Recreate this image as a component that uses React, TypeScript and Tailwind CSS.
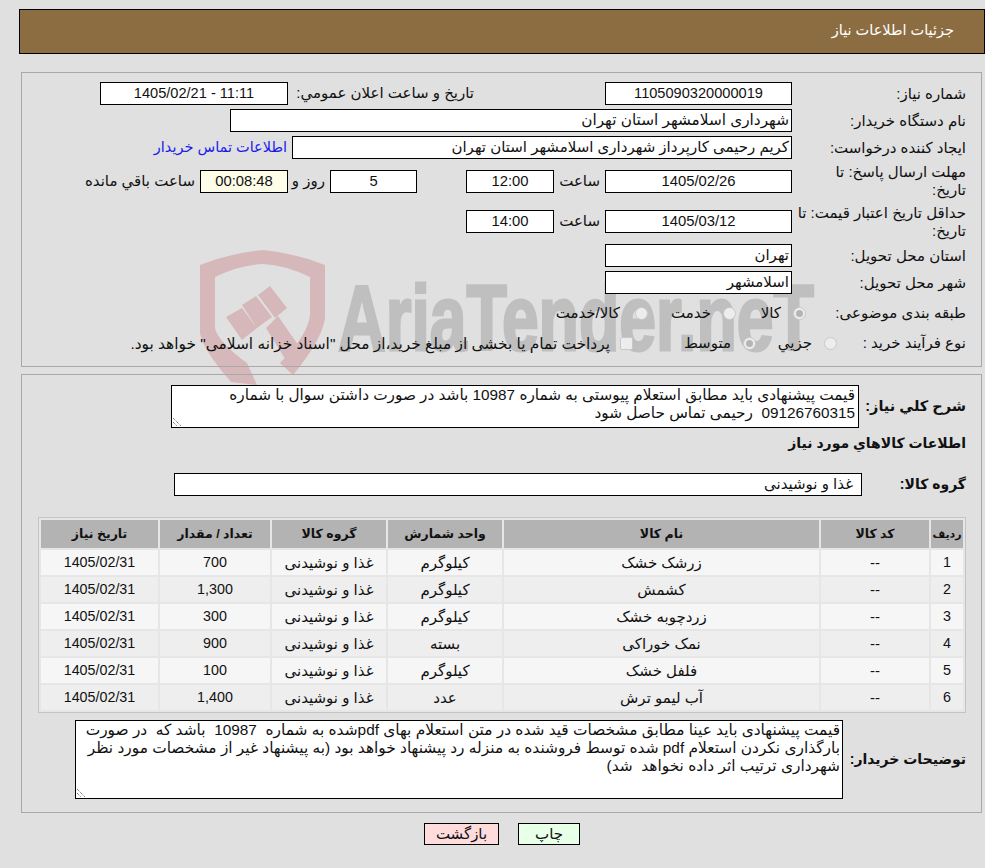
const rows = [
  ['1', '--', 'زرشک خشک', 'کیلوگرم', 'غذا و نوشیدنی', '700', '1405/02/31'],
  ['2', '--', 'کشمش', 'کیلوگرم', 'غذا و نوشیدنی', '1,300', '1405/02/31'],
  ['3', '--', 'زردچوبه خشک', 'کیلوگرم', 'غذا و نوشیدنی', '300', '1405/02/31'],
  ['4', '--', 'نمک خوراکی', 'بسته', 'غذا و نوشیدنی', '900', '1405/02/31'],
  ['5', '--', 'فلفل خشک', 'کیلوگرم', 'غذا و نوشیدنی', '100', '1405/02/31'],
  ['6', '--', 'آب لیمو ترش', 'عدد', 'غذا و نوشیدنی', '1,400', '1405/02/31'],
];

const headers = ['ردیف', 'کد کالا', 'نام کالا', 'واحد شمارش', 'گروه کالا', 'تعداد / مقدار', 'تاریخ نیاز'];
const colWidths = ['w-[32px]', 'w-[108px]', 'w-[315px]', 'w-[114px]', 'w-[114px]', 'w-[110px]', 'w-[117px]'];

function Field({ className, children }: { className: string; children?: React.ReactNode }) {
  return (
    <div className={`h-[23px] shrink-0 border border-black text-center leading-[20px] whitespace-nowrap ${className}`}>
      {children}
    </div>
  );
}

function Radio({ checked }: { checked?: boolean }) {
  return (
    <span className="flex h-[13px] w-[13px] shrink-0 items-center justify-center rounded-full border border-[#c8c8c8] bg-[#ededed]">
      {checked && <span className="h-[7px] w-[7px] rounded-full bg-[#b4b4b4]" />}
    </span>
  );
}

function Label({ children }: { children: React.ReactNode }) {
  return <div className="w-[189px] shrink-0 pr-[15px] leading-[18px] whitespace-nowrap">{children}</div>;
}

function Resize() {
  return (
    <svg className="absolute bottom-0 left-0" width="10" height="10" viewBox="0 0 10 10">
      <path d="M1 1l8 8M1 5l4 4" stroke="#555" strokeWidth="1" fill="none" strokeDasharray="1 1" />
    </svg>
  );
}

function Watermark() {
  return (
    <div dir="ltr" className="pointer-events-none absolute top-0 left-0 -z-10">
      <svg className="absolute top-[250px] left-[200px]" width="125" height="140" viewBox="0 0 125 140">
        <path
          d="M0 15Q30 3 63 0Q95 3 125 15V68Q122 90 93 125L80 113Q108 85 110 65V27Q85 15 63 14Q40 15 15 27V78Q18 92 47 113L57 135L31 132Q3 100 0 83Z"
          fill="#d6b8ba"
        />
        <path d="M26 67L42 58 57 78 42 90Z M42 55L56 46 72 67 57 78Z M58 45L70 36 87 58 75 68Z" fill="#d6b8ba" />
        <path d="M66 78L78 66 105 105 92 120Z" fill="#d6b8ba" />
      </svg>
      <div className="absolute top-[268px] left-[338px] origin-left scale-x-[0.71] font-['Liberation_Sans',sans-serif] text-[93px] leading-[100px] font-bold whitespace-nowrap text-[#bfbfbf] [-webkit-text-stroke:3px_#bfbfbf]">
        AriaTender.neT
      </div>
    </div>
  );
}

export default function App() {
  return (
    <div
      dir="rtl"
      className="relative isolate h-[868px] w-[985px] overflow-hidden bg-[#e0e0e0] pt-[9px] font-['Liberation_Sans','DejaVu_Sans',sans-serif] text-[15px] text-[#111]"
    >
      <Watermark />

      <div className="ml-[19px] flex h-[45px] items-center border border-black bg-[#8c6d42] pr-[30px] pb-[2px] text-[14.5px] text-white">
        جزئیات اطلاعات نیاز
      </div>

      <div className="mt-[18px] mr-[3px] ml-[21px] h-[295px] border border-[#a8a8a8] pt-[9px]">
        <div className="flex h-[23px] items-center">
          <Label>شماره نیاز:</Label>
          <Field className="w-[187px] bg-white text-[14.6px]">1105090320000019</Field>
          <div className="mr-[131px] w-[186px] whitespace-nowrap">تاریخ و ساعت اعلان عمومي:</div>
          <Field className="w-[188px] bg-white text-[14.6px]">
            <span dir="ltr">1405/02/21 - 11:11</span>
          </Field>
        </div>
        <div className="mt-[4px] flex h-[23px] items-center">
          <Label>نام دستگاه خریدار:</Label>
          <Field className="w-[562px] bg-white pr-[2px] text-right text-[15.3px]">شهرداری اسلامشهر استان تهران</Field>
        </div>
        <div className="mt-[4px] flex h-[23px] items-center">
          <Label>ایجاد کننده درخواست:</Label>
          <Field className="w-[500px] bg-white pr-[2px] text-right">کریم رحیمی کارپرداز شهرداری اسلامشهر استان تهران</Field>
          <span className="mr-[5px] text-[14.5px] whitespace-nowrap text-[#1a1aee]">اطلاعات تماس خریدار</span>
        </div>
        <div className="mt-[11px] flex h-[22px] items-center">
          <Label>
            مهلت ارسال پاسخ: تا
            <br />
            تاریخ:
          </Label>
          <Field className="h-[22px] w-[187px] bg-white text-[14.8px]">1405/02/26</Field>
          <div className="w-[51px] pr-[5px]">ساعت</div>
          <Field className="h-[22px] w-[88px] bg-white text-[14.8px]">12:00</Field>
          <div className="w-[49px]" />
          <Field className="h-[22px] w-[87px] bg-white text-[14.8px]">5</Field>
          <div className="w-[42px] pr-[5px] whitespace-nowrap">روز و</div>
          <Field className="h-[22px] w-[88px] bg-[#fdfde8] text-[14.8px]">00:08:48</Field>
          <div className="mr-[5px] whitespace-nowrap">ساعت باقي مانده</div>
        </div>
        <div className="mt-[18px] flex h-[23px] items-center">
          <Label>
            حداقل تاریخ اعتبار قیمت: تا
            <br />
            تاریخ:
          </Label>
          <Field className="w-[187px] bg-white text-[14.8px]">1405/03/12</Field>
          <div className="w-[51px] pr-[5px]">ساعت</div>
          <Field className="w-[88px] bg-white text-[14.8px]">14:00</Field>
        </div>
        <div className="mt-[11px] flex h-[23px] items-center">
          <Label>استان محل تحویل:</Label>
          <Field className="w-[187px] bg-white pr-[2px] text-right">تهران</Field>
        </div>
        <div className="mt-[4px] flex h-[23px] items-center">
          <Label>شهر محل تحویل:</Label>
          <Field className="w-[187px] bg-white pr-[2px] text-right">اسلامشهر</Field>
        </div>
        <div className="mt-[8px] flex h-[23px] items-center whitespace-nowrap">
          <div className="w-[175px] shrink-0 pr-[15px]">طبقه بندی موضوعی:</div>
          <Radio checked />
          <span className="mr-[12px] w-[45px]">کالا</span>
          <Radio />
          <span className="mr-[12px] w-[63px]">خدمت</span>
          <Radio />
          <span className="mr-[15px]">کالا/خدمت</span>
        </div>
        <div className="mt-[7px] flex h-[23px] items-center whitespace-nowrap">
          <div className="w-[144px] shrink-0 pr-[15px]">نوع فرآیند خرید :</div>
          <Radio />
          <span className="mr-[12px] w-[56px]">جزيي</span>
          <Radio checked />
          <span className="mr-[12px] w-[98px]">متوسط</span>
          <span className="h-[13px] w-[13px] shrink-0 rounded-[2px] border border-[#c8c8c8] bg-[#ededed]" />
          <span className="mr-[10px] text-[15.4px]">پرداخت تمام یا بخشی از مبلغ خرید،از محل "اسناد خزانه اسلامی" خواهد بود.</span>
        </div>
      </div>

      <div className="mt-[7px] mr-[3px] ml-[21px] h-[439px] border border-[#a8a8a8]">
        <div className="mt-[10px] flex items-center">
          <div className="w-[122px] shrink-0 pr-[15px] text-[14.5px] font-bold whitespace-nowrap">شرح کلي نیاز:</div>
          <div className="relative h-[43px] w-[688px] border border-black bg-white pr-[3px] text-right text-[15.3px] leading-[18px] whitespace-nowrap">
            قیمت پیشنهادی باید مطابق استعلام پیوستی به شماره 10987 باشد در صورت داشتن سوال با شماره
            <br />
            09126760315&nbsp; رحیمی تماس حاصل شود
            <Resize />
          </div>
        </div>
        <div className="h-[30px] pr-[15px] text-[14px] leading-[30px] font-bold">اطلاعات کالاهاي مورد نیاز</div>
        <div className="mt-[15px] flex h-[23px] items-center">
          <div className="w-[119px] shrink-0 pr-[15px] text-[14px] font-bold">گروه کالا:</div>
          <Field className="w-[688px] bg-white pr-[8px] text-right">غذا و نوشیدنی</Field>
        </div>
        <div className="mt-[21px] mr-[15px] w-[928px] border border-[#c4c4c4] bg-[#e6e6e6]">
          <table className="w-full table-fixed border-separate border-spacing-[2px] text-center">
            <thead>
              <tr className="h-[28px] bg-[#b3b3b3] text-[12.5px]">
                {headers.map((h, i) => (
                  <th key={h} className={`${colWidths[i]} p-0 font-bold whitespace-nowrap ${i === 0 ? 'text-[11px]' : ''}`}>
                    {h}
                  </th>
                ))}
              </tr>
            </thead>
            <tbody>
              {rows.map((row, i) => (
                <tr key={row[0]} className={`h-[25px] ${i % 2 === 0 ? 'bg-[#f6f6f6]' : 'bg-[#eeeeee]'}`}>
                  {row.map((c, j) => (
                    <td key={j} className={`p-0 leading-[25px] ${j === 0 || j > 4 ? 'text-[14.3px]' : ''}`}>
                      {c}
                    </td>
                  ))}
                </tr>
              ))}
            </tbody>
          </table>
        </div>
        <div className="mt-[7px] flex items-center">
          <div className="w-[138px] shrink-0 pr-[15px] text-[14px] font-bold whitespace-nowrap">توضیحات خریدار:</div>
          <div className="relative h-[79px] w-[768px] border border-black bg-white pr-[2px] text-right text-[15.4px] leading-[18px] whitespace-nowrap">
            قیمت پیشنهادی باید عینا مطابق مشخصات قید شده در متن استعلام بهای pdfشده به شماره&nbsp; 10987&nbsp; باشد که&nbsp; در صورت
            <br />
            بارگذاری نکردن استعلام pdf شده توسط فروشنده به منزله رد پیشنهاد خواهد بود (به پیشنهاد غیر از مشخصات مورد نظر
            <br />
            شهرداری ترتیب اثر داده نخواهد&nbsp; شد)
            <Resize />
          </div>
        </div>
      </div>

      <div className="mt-[10px] ml-[19px] flex justify-center gap-[19px]">
        <button className="h-[22px] w-[62px] border border-black bg-[#e8ffe8] leading-[20px]">چاپ</button>
        <button className="h-[22px] w-[75px] border border-black bg-[#ffdcdc] leading-[20px]">بازگشت</button>
      </div>
    </div>
  );
}
